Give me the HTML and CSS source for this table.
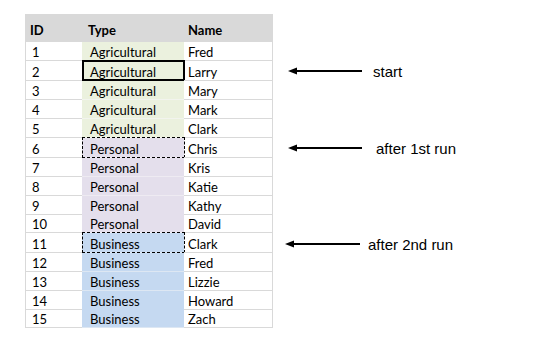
FILE: index.html
```html
<!DOCTYPE html>
<html>
<head>
<meta charset="utf-8">
<link rel="stylesheet" href="styles.css">
</head>
<body>
<div class="page">
  <div class="sheet">
    <div class="row head"><div class="c id">ID</div><div class="c type">Type</div><div class="c name">Name</div></div>
    <div class="row"><div class="c id">1</div><div class="c type agri">Agricultural</div><div class="c name">Fred</div></div>
    <div class="row tall"><div class="c id">2</div><div class="c type agri sel">Agricultural</div><div class="c name">Larry</div></div>
    <div class="row"><div class="c id">3</div><div class="c type agri">Agricultural</div><div class="c name">Mary</div></div>
    <div class="row"><div class="c id">4</div><div class="c type agri">Agricultural</div><div class="c name">Mark</div></div>
    <div class="row"><div class="c id">5</div><div class="c type agri">Agricultural</div><div class="c name">Clark</div></div>
    <div class="row tall"><div class="c id">6</div><div class="c type pers marq">Personal</div><div class="c name">Chris</div></div>
    <div class="row"><div class="c id">7</div><div class="c type pers">Personal</div><div class="c name">Kris</div></div>
    <div class="row"><div class="c id">8</div><div class="c type pers">Personal</div><div class="c name">Katie</div></div>
    <div class="row short"><div class="c id">9</div><div class="c type pers">Personal</div><div class="c name">Kathy</div></div>
    <div class="row"><div class="c id">10</div><div class="c type pers">Personal</div><div class="c name">David</div></div>
    <div class="row tall"><div class="c id">11</div><div class="c type biz marq">Business</div><div class="c name">Clark</div></div>
    <div class="row"><div class="c id">12</div><div class="c type biz">Business</div><div class="c name">Fred</div></div>
    <div class="row"><div class="c id">13</div><div class="c type biz">Business</div><div class="c name">Lizzie</div></div>
    <div class="row short"><div class="c id">14</div><div class="c type biz">Business</div><div class="c name">Howard</div></div>
    <div class="row"><div class="c id">15</div><div class="c type biz">Business</div><div class="c name">Zach</div></div>
  </div>
  <div class="notes">
    <div class="note n1">
      <svg class="arrow" width="74" height="10" viewBox="0 0 74 10"><line x1="6" y1="5" x2="74" y2="5" stroke="#000" stroke-width="2"/><polygon points="0,5 9,1.5 9,8.5" fill="#000"/></svg>
      <span class="label">start</span>
    </div>
    <div class="note n2">
      <svg class="arrow" width="74" height="10" viewBox="0 0 74 10"><line x1="6" y1="5" x2="74" y2="5" stroke="#000" stroke-width="2"/><polygon points="0,5 9,1.5 9,8.5" fill="#000"/></svg>
      <span class="label">after 1st run</span>
    </div>
    <div class="note n3">
      <svg class="arrow" width="75" height="10" viewBox="0 0 75 10"><line x1="6" y1="5" x2="75" y2="5" stroke="#000" stroke-width="2"/><polygon points="0,5 9,1.5 9,8.5" fill="#000"/></svg>
      <span class="label">after 2nd run</span>
    </div>
  </div>
</div>
</body>
</html>
```

FILE: styles.css
```css
html, body {
  margin: 0;
  padding: 0;
  background: #fff;
}
.page {
  display: flex;
  align-items: flex-start;
}
.sheet {
  margin: 14px 0 0 25px;
  width: 248px;
  box-sizing: border-box;
  border-left: 1px solid #d9d9d9;
  border-right: 1px solid #d9d9d9;
  font-family: Lato, "Liberation Sans", sans-serif;
  font-size: 13px;
  color: #000;
}
.row {
  display: grid;
  grid-template-columns: 56px 102px 88px;
  height: 19px;
  box-sizing: border-box;
}
.row.tall { height: 20px; }
.row.short { height: 18px; }
.row.head {
  height: 28px;
  background: #d9d9d9;
  font-weight: bold;
}
.c {
  display: flex;
  align-items: center;
  box-sizing: border-box;
  padding-top: 2px;
  border-bottom: 1px solid #d9d9d9;
  white-space: nowrap;
  position: relative;
}
.head .c { padding-top: 4px; }
.id { padding-left: 6px; }
.head .id { padding-left: 4px; }
.type { padding-left: 8px; }
.head .type { padding-left: 6px; }
.name { padding-left: 4px; }
.agri { background: #ebf1de; border-bottom-color: #f2f4ee; }
.pers { background: #e4dfec; border-bottom-color: #eeebf2; }
.biz { background: #c5d9f1; border-bottom-color: #dde7f3; }
.sel::after {
  content: "";
  position: absolute;
  left: 0;
  right: -1px;
  top: -1px;
  bottom: -1px;
  border: 2px solid #000;
}
.marq::after {
  content: "";
  position: absolute;
  left: 0;
  right: -1px;
  top: -1px;
  bottom: -1px;
  border: 1px dashed #000;
}
.notes {
  display: flex;
  flex-direction: column;
  margin-left: 12px;
  font-family: "Liberation Sans", Arial, sans-serif;
  font-size: 15px;
  color: #000;
}
.note {
  display: flex;
  align-items: center;
  height: 20px;
}
.arrow { display: block; flex: none; }
.n1 { margin-top: 61px; padding-left: 3px; }
.n1 .label { margin-left: 11px; }
.n2 { margin-top: 57px; padding-left: 3px; }
.n2 .label { margin-left: 14px; }
.n3 { margin-top: 76px; }
.n3 .label { margin-left: 8px; }
```
